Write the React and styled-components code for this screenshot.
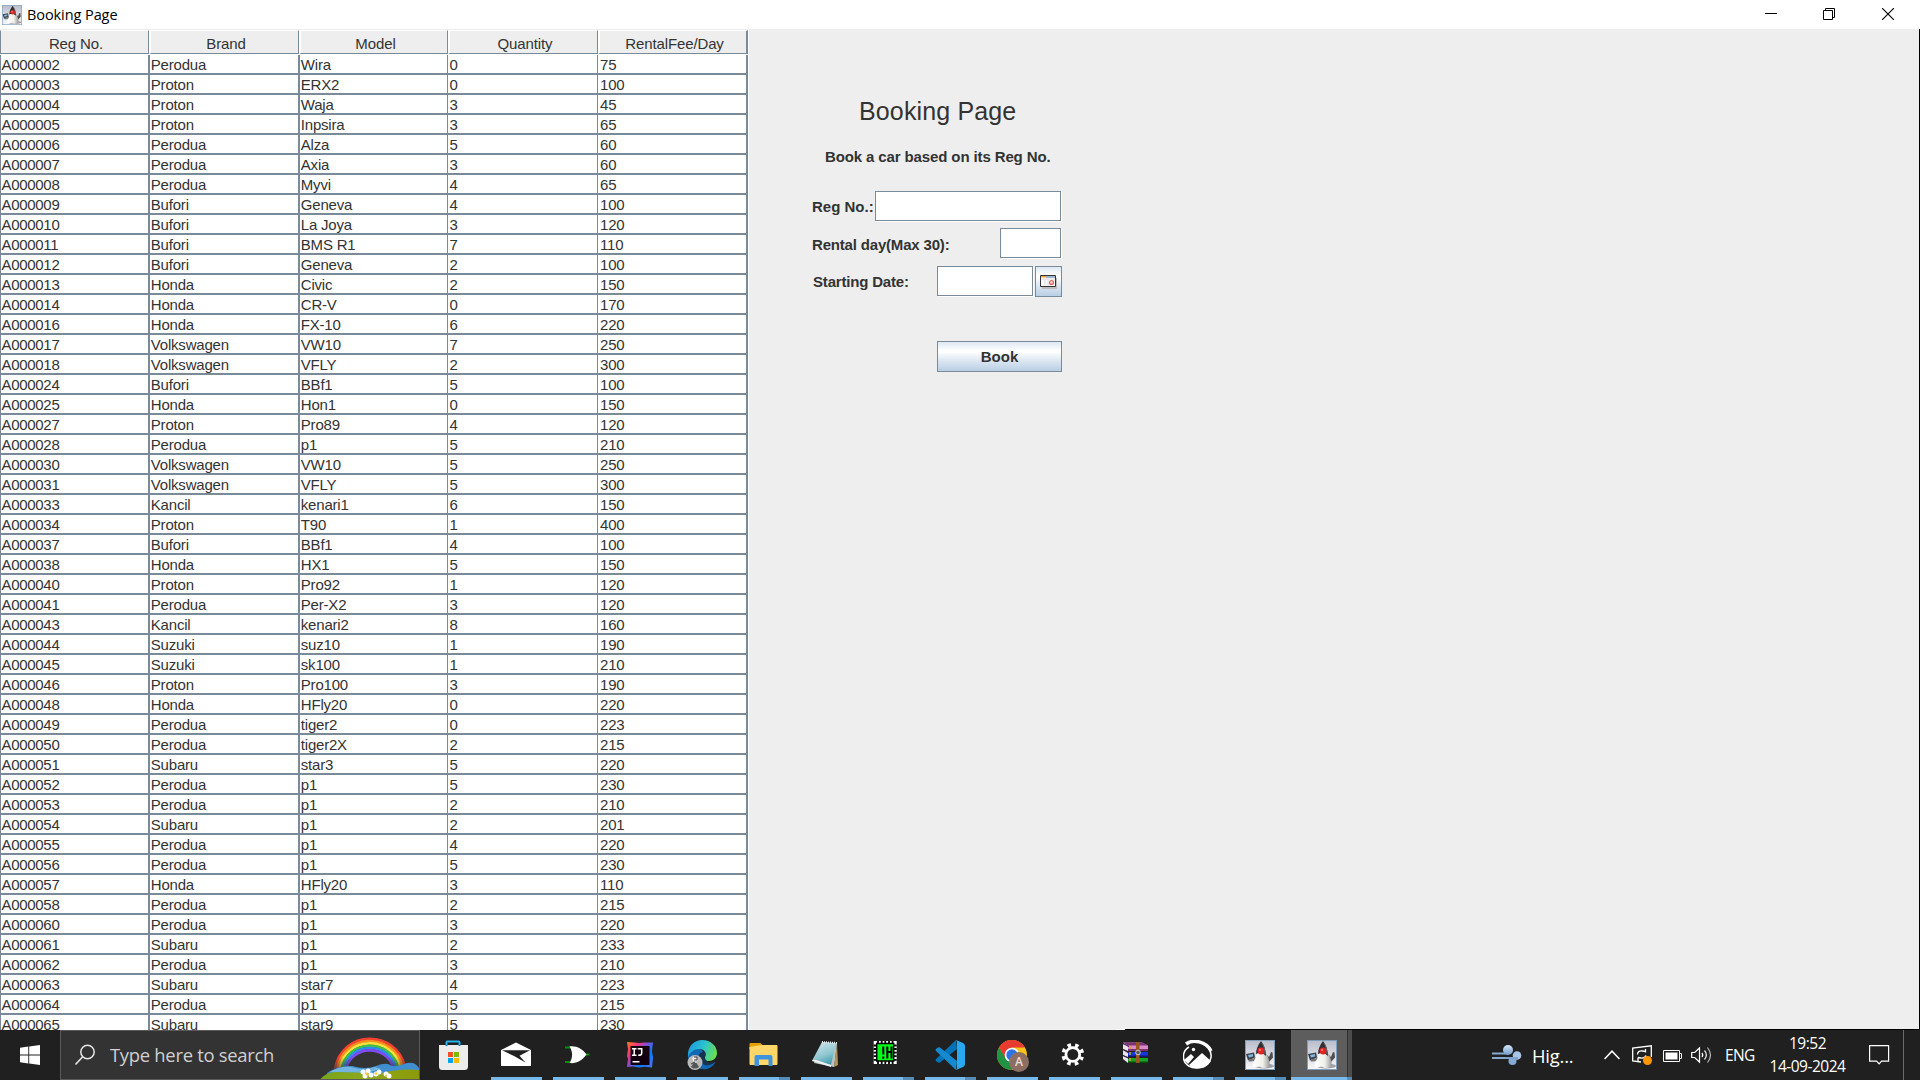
import React from "react";
import styled, { createGlobalStyle, css } from "styled-components";

const GlobalStyle = createGlobalStyle`
  * { box-sizing: border-box; }
  html, body { margin: 0; padding: 0; overflow: hidden; background: #eee; }
`;

const SWING = `"Liberation Sans", Arial, sans-serif`;
const SYSTEM = `"Open Sans", "Noto Sans", sans-serif`;
const STEEL = "#7a8a99";

const Screen = styled.div`
  width: 1920px;
  height: 1080px;
  display: flex;
  flex-direction: column;
  overflow: hidden;
  background: #eee;
`;

/* ---------- title bar ---------- */
const TitleBar = styled.header`
  height: 29px;
  flex: none;
  display: flex;
  align-items: center;
  padding-left: 2px;
  padding-right: 3px;
  background: #fff;
`;
const TitleText = styled.span`
  flex: 1;
  margin-left: 5px;
  font: 14.5px/20px ${SYSTEM};
  letter-spacing: -0.08px;
  color: #000;
`;
const WindowButton = styled.div`
  width: 58.5px;
  height: 29px;
  display: flex;
  align-items: center;
  justify-content: center;
  padding-bottom: 1px;
  svg { display: block; }
`;

/* ---------- window body ---------- */
const Body = styled.main`
  height: 1001px;
  flex: none;
  display: flex;
  overflow: hidden;
  border-right: 1px solid #000;
`;
const Table = styled.section`
  width: 748px;
  flex: none;
  overflow: hidden;
  background: #fff;
  font: 15px/18px ${SWING};
  color: #333;
`;
const COLUMNS = "150px 150px 148px 150px 150px";
const HeadRow = styled.div`
  display: grid;
  grid-template-columns: 149px 150px 149px 150px 150px;
  height: 26px;
  border-top: 1px solid #eee;
  border-bottom: 1px solid #fff;
`;
const HeadCell = styled.div`
  height: 24px;
  background: #eee;
  border-style: solid;
  border-width: 1px 1px 1px 2px;
  border-color: #fff ${STEEL} ${STEEL} #fff;
  padding-left: 3px;
  text-align: center;
  line-height: 25px;
  letter-spacing: -0.12px;
  ${(p) => p.$first && css`border-left-color: ${STEEL}; border-left-width: 1px;`}
  ${(p) => p.$last && css`border-right-width: 2px;`}
`;
const Row = styled.div`
  display: grid;
  grid-template-columns: ${COLUMNS};
  height: 20px;
  border-bottom: 2px solid ${STEEL};
`;
const Cell = styled.div`
  height: 18px;
  padding-left: ${(p) => p.$pad}px;
  border-right: ${(p) => p.$rule}px solid ${STEEL};
  border-left: ${(p) => (p.$first ? 1 : 0)}px solid ${STEEL};
  letter-spacing: ${(p) => (p.$first ? -0.3 : -0.2)}px;
  line-height: 19px;
  white-space: nowrap;
`;

/* ---------- booking form ---------- */
const FormPane = styled.section`
  flex: 1;
  border-left: 1px solid #fff;
  padding: 66px 0 0 63px;
  font: bold 15px/18px ${SWING};
  color: #333;
`;
const Form = styled.div`
  width: 250px;
  display: flex;
  flex-direction: column;
`;
const Heading = styled.h1`
  margin: 0;
  font: 25px/32px ${SWING};
  padding-left: 47px;
  letter-spacing: 0.14px;
  white-space: nowrap;
`;
const Hint = styled.p`
  margin: 21px 0 0;
  padding-left: 13px;
  letter-spacing: -0.12px;
  white-space: nowrap;
`;
const Field = styled.div`
  display: flex;
  justify-content: space-between;
  align-items: flex-start;
  height: 31px;
  margin-top: ${(p) => p.$gap}px;
`;
const Label = styled.label`
  padding-top: ${(p) => p.$drop}px;
  padding-left: ${(p) => p.$indent || 0}px;
  letter-spacing: ${(p) => p.$track || 0}px;
  white-space: nowrap;
`;
const Input = styled.div`
  width: ${(p) => p.$w}px;
  height: 30px;
  background: #fff;
  border: 1px solid ${STEEL};
  box-shadow: 1px 1px 0 #fff;
  margin-right: 1px;
`;
const Group = styled.div`
  display: flex;
  gap: 1px;
`;
const metal = css`
  border: 1px solid ${STEEL};
  background: linear-gradient(#dde8f3 0%, #fff 30%, #fff 34%, #dfe8f2 62%, #b8cfe5 100%);
`;
const DateButton = styled.div`
  ${metal}
  width: 27px;
  height: 31px;
  display: flex;
  padding: 8px 0 0 4px;
`;
const BookButton = styled.div`
  ${metal}
  width: 125px;
  height: 31px;
  margin: 44px 0 0 125px;
  text-align: center;
  line-height: 29px;
`;

/* ---------- taskbar ---------- */
const TaskTop = styled.div`
  height: 1px;
  margin: -1px 0 0 1116px;
  border-left: 9px solid #fff;
  background: #000;
  flex: none;
`;
const Taskbar = styled.footer`
  height: 50px;
  flex: none;
  display: flex;
  background: #202020;
  color: #fff;
  font-family: ${SYSTEM};
`;
const Start = styled.div`
  width: 60px;
  padding: 15px 0 0 20px;
`;
const Search = styled.div`
  width: 360px;
  height: 50px;
  display: flex;
  background: #333;
  border: 1px solid #5a5a5a;
  padding-left: 13px;
  overflow: hidden;
`;
const SearchText = styled.span`
  width: 209px;
  margin-left: 14px;
  font-size: 18.4px;
  line-height: 48px;
  letter-spacing: -0.27px;
  color: #d0d0d0;
  white-space: nowrap;
  flex: none;
`;
const Apps = styled.div`
  display: flex;
  margin-left: 3px;
`;
const AppButton = styled.div`
  width: ${(p) => (p.$active ? 61 : 62)}px;
  height: 50px;
  padding: 0 ${(p) => (p.$active ? 0 : 5.5)}px;
  display: flex;
  flex-direction: column;
  align-items: center;
  background: ${(p) => (p.$active ? "linear-gradient(90deg,#5d5d5d 56px,#303030 56px,#303030 57px,#4c4c4c 57px)" : "none")};
  svg { display: block; margin: 10px 0 7px; flex: none; }
`;
const Running = styled.div`
  width: 100%;
  height: 3px;
  background: ${(p) => (p.$stack ? `linear-gradient(90deg,#76b9ed calc(100% - ${p.$stack}px),#568cb5 calc(100% - ${p.$stack}px))` : "#76b9ed")};
`;
const Tray = styled.div`
  flex: 1;
  display: flex;
  align-items: flex-start;
  padding-left: ${(p) => p.$lead}px;
  font-size: 15.5px;
  svg { display: block; flex: none; }
`;
const Slot = styled.div`
  width: ${(p) => p.$w}px;
  flex: none;
  padding-top: ${(p) => p.$top}px;
  padding-left: ${(p) => p.$left || 0}px;
`;
const Weather = styled(Slot)`
  font-size: 18.4px;
  line-height: 25px;
  letter-spacing: -0.2px;
`;
const Lang = styled(Slot)`
  line-height: 22px;
  letter-spacing: -0.6px;
`;
const Clock = styled(Slot)`
  line-height: 23px;
  text-align: center;
  letter-spacing: -0.5px;
`;
const ShowDesktop = styled.div`
  height: 50px;
  border-left: 1px solid #6a6a6a;
`;

/* ---------- icons ---------- */
const Duke = ({ size }) => (
  <svg width={size} height={size} viewBox="0 0 30 30">
    <defs>
      <linearGradient id="dk" x1="0" y1="0" x2="0" y2="1">
        <stop offset="0" stopColor="#b9bdca" />
        <stop offset="1" stopColor="#f8f8fb" />
      </linearGradient>
      <linearGradient id="db" x1="0" y1="0" x2="1" y2="0">
        <stop offset="0" stopColor="#fff" />
        <stop offset="0.6" stopColor="#f0f0ea" />
        <stop offset="1" stopColor="#999" />
      </linearGradient>
    </defs>
    <rect x=".5" y=".5" width="29" height="29" fill="url(#dk)" stroke="#7f9db9" />
    <ellipse cx="19" cy="26" rx="10" ry="2.500" fill="#9fa0a8" />
    <path d="M1 14l8-1.500 1 5-7 3z" fill="#3c4148" />
    <path d="M3 15l5-1v2.500l-4 1z" fill="#82b7e4" />
    <path d="M4 20c3 1 5 0 8-2" stroke="#777" strokeWidth="2.500" fill="none" />
    <path d="M21 14l3 3 2-5 1.500.500.500 5-4 4.500-4-2z" fill="#4d4d50" />
    <path d="M12 13c-1 6-4.500 9-4.500 13 2 3 6 0 8 1 3 2 6 1 9-1 1-5-2-10-4-14z" fill="url(#db)" />
    <path d="M16 1c-3 4-5 8-5 13 4-2 7-1 10 2 0-6-2-11-5-15z" fill="#303032" />
    <path d="M17 3c2 3 3 7 3 11" stroke="#666" fill="none" />
    <circle cx="16" cy="11" r="3.400" fill="#e02424" />
    <circle cx="15" cy="10" r="1.200" fill="#f87060" />
  </svg>
);
const Store = () => (
  <svg width="30" height="30" viewBox="1 0 30 30">
    <path d="M8.500 6V2.500a1 1 0 0 1 1-1h11a1 1 0 0 1 1 1V6" fill="none" stroke="#27b2ee" strokeWidth="2" />
    <path d="M1 5h29v21.500a3.500 3.500 0 0 1-3.500 3.500h-22A3.500 3.500 0 0 1 1 26.500z" fill="#ececec" />
    <path d="M8.500 6V5M21.500 6V5" stroke="#0f78c4" strokeWidth="2" />
    <path fill="#f25022" d="M10 12h5v5h-5z" />
    <path fill="#7fba00" d="M16 12h5v5h-5z" />
    <path fill="#00a4ef" d="M10 18h5v5h-5z" />
    <path fill="#ffb900" d="M16 18h5v5h-5z" />
  </svg>
);
const Mail = () => (
  <svg width="30" height="30" viewBox="0 0 30 30">
    <path fill="#fff" d="M15 2.500L30 10v16H0V10z" />
    <path fill="#202020" d="M1 10.300h28l-10.500 5.500 6 6.700L13 16z" />
  </svg>
);
const Gate = () => (
  <svg width="30" height="30" viewBox="0 0 30 30">
    <path d="M2 7.500h5M2 22h5M22 14.500h4.500" stroke="#0a8a12" strokeWidth="2" />
    <path fill="#fff" d="M6.500 6.500c7-1 13 2.500 17 8-4 5.500-10 9.500-17 8.500 3.500-5.500 3.500-11 0-16.500z" />
  </svg>
);
const Idea = () => (
  <svg width="30" height="30" viewBox="0 0 30 30">
    <defs>
      <linearGradient id="ij" x1="0" y1="0" x2="1" y2=".8">
        <stop offset="0" stopColor="#fc801d" />
        <stop offset=".3" stopColor="#f0337f" />
        <stop offset=".52" stopColor="#7b53d8" />
        <stop offset=".75" stopColor="#087cfa" />
        <stop offset="1" stopColor="#3f74f6" />
      </linearGradient>
    </defs>
    <path fill="url(#ij)" d="M2 2l8 .5L14 3l5-.5 9 0-1 9 1 6-1 10-7-.8-6 .8-6-1-6 .5 1-8L2 16l1-7z" />
    <path fill="#12000f" d="M5.500 6h19v19h-19z" />
    <path d="M7 8.700h4.500M7 15.300h4.500M9.200 8.700v6.600M12.700 8.700h4v4.500q0 2.100-3.500 2.100M7.500 21.800h7" stroke="#fff" strokeWidth="1.500" fill="none" />
  </svg>
);
const Edge = () => (
  <svg width="30" height="30" viewBox="0 0 30 30">
    <defs>
      <linearGradient id="eg" x1="0" y1=".3" x2="1" y2=".6">
        <stop offset="0" stopColor="#1c9ae0" />
        <stop offset=".5" stopColor="#2cc3cf" />
        <stop offset="1" stopColor="#6be04b" />
      </linearGradient>
    </defs>
    <path fill="#1267b5" d="M1 14C6 6 15 8 16 12c-3 2-4 8 2 11 4 1.500 8 0 10.500-1C25 29 17 31 11 28 4 25 0 20 1 14z" />
    <path fill="url(#eg)" d="M1 13C2 5 8 0 15 0c9 0 15 6 15 13 0 5-4 8-8 8-4 0-5-2-4-4 2-3 0-8-6-8-5 0-9 3-11 8z" />
    <path fill="#17324e" d="M13 13c-2 4-1 10 5 12 4 1 8-1 10-3-4 2-9 0-10-4-1-2 1-3 0-6z" />
    <circle cx="8" cy="22.500" r="7.500" fill="#b8b9b8" />
    <circle cx="8" cy="19" r="2.600" fill="#ececec" />
    <path d="M4 27l2.500-4h3l2.500 4q-4 3-8 0" fill="#555" />
    <path d="M7 17h3v3H7M4 24l4-2" stroke="#3b3b3b" fill="none" />
  </svg>
);
const Explorer = () => (
  <svg width="30" height="30" viewBox="0 0 30 30">
    <path fill="#e2a100" d="M.5 4q0-1 1-1h10l2 2v4H.5z" />
    <path fill="#ffd667" d="M.5 7l12-2h15q1 0 1 1v18q0 1-1 1h-26q-1 0-1-1z" />
    <path fill="#3d93dd" d="M5.500 26V17q0-2 2-2h14q2 0 2 2v9h-4v-6.500h-9.500V26z" />
  </svg>
);
const Notepad = () => (
  <svg width="30" height="30" viewBox="0 0 30 30">
    <defs>
      <linearGradient id="np" x1=".2" y1="0" x2=".6" y2="1">
        <stop offset="0" stopColor="#cfe5e7" />
        <stop offset=".6" stopColor="#8dc6d0" />
        <stop offset="1" stopColor="#409eaf" />
      </linearGradient>
    </defs>
    <path fill="#b69459" d="M26 4l1 21-4 2z" />
    <path fill="#bcc2c1" d="M11 3l15 1-3 23-20-4z" />
    <path fill="url(#np)" d="M11 2l14 1-5 22-18-6z" />
    <path fill="#eef2f2" d="M2 19l18 6v2L1 21z" />
    <path d="M11 2l15 1" stroke="#eee" strokeWidth="2" strokeDasharray="1 1" />
  </svg>
);
const Chip = () => (
  <svg width="30" height="30" viewBox="0 0 30 30">
    <path fill="#fff" d="M.7 1h23v23H.7z" />
    <path d="M5 1v23M8.700 1v23M12.300 1v23M16 1v23M19.600 1v23M.7 5.500h23M.7 9h23M.7 12.600h23M.7 16.200h23M.7 19.800h23" stroke="#000" strokeWidth="1.800" />
    <path fill="#00ff18" stroke="#000" strokeWidth="1.500" d="M3.700 3.500h17v17.500h-17z" />
    <path d="M10.300 6.500v8M10.300 16.500v2.200M14.300 6.500v12M18.500 6.500v12M14.300 12h4" stroke="#000" strokeWidth="2" />
  </svg>
);
const Code = () => (
  <svg width="30" height="30" viewBox="0 0 30 30">
    <path fill="#0072b8" d="M21 0L1 19q-1 1 0 2l2 1.500q1 .5 2 0L22 9z" />
    <path fill="#168ad0" d="M21 30L1 11q-1-1 0-2l2-1.500q1-.5 2 0L22 21z" />
    <path fill="#29a8f1" d="M21 0l7 3q2 1 2 3v18q0 2-2 3l-7 3q1-1 1-3V3q0-2-1-3z" />
  </svg>
);
const Letter = styled.span`
  width: 20px;
  height: 20px;
  position: absolute;
  left: 12px;
  top: 12px;
  border-radius: 50%;
  background: #8d6e63;
  color: #e9dedb;
  font: 600 12px/20px ${SYSTEM};
  text-align: center;
`;
const BadgeBox = styled.div`
  position: relative;
  width: 30px;
  height: 30px;
  margin: 10px 0 7px;
  flex: none;
  && svg { margin: 0; }
`;
const Chrome = () => (
  <BadgeBox>
    <svg width="30" height="30" viewBox="0 0 30 30">
      <circle cx="15" cy="15" r="15" fill="#f9c21b" />
      <path fill="#e63b2e" d="M2 7.500A15 15 0 0 1 28 7.500H15L8.500 19z" />
      <path fill="#229342" d="M2 7.500A15 15 0 0 0 15 30l6.500-11H9z" />
      <circle cx="15" cy="15" r="7.300" fill="#fff" />
      <circle cx="15" cy="15" r="5.700" fill="#2a73e8" />
    </svg>
    <Letter>A</Letter>
  </BadgeBox>
);
const Gear = () => (
  <svg width="30" height="30" viewBox="1.200 0 30 30">
    <circle cx="15" cy="14.500" r="9.300" fill="none" stroke="#fff" strokeWidth="4.200" strokeDasharray="3.500 3.804" strokeDashoffset="1.750" transform="rotate(22.500 15 14.500)" />
    <circle cx="15" cy="14.500" r="6.900" fill="none" stroke="#fff" strokeWidth="2.800" />
  </svg>
);
const Rar = () => (
  <svg width="30" height="30" viewBox="0 0 30 30">
    <path fill="#d98acb" d="M2 2.500h19l6 3v5H7z" />
    <path fill="#7d3374" d="M2 2.500h19l6 3H7zM7 9h20v2H7z" />
    <path fill="#1636e0" d="M7 12h20v5H7z" />
    <path fill="#0a1a72" d="M7 15.500h20v1.500H7z" />
    <path fill="#18a321" d="M7 18h20v5H7z" />
    <path fill="#0a4c10" d="M7 21.500h20v1.500H7z" />
    <path fill="#e8e4ee" d="M2 4l5 3v4L2 9zM2 10l5 3v4l-5-2zM2 16l5 2v5l-5-4z" />
    <path d="M2 3.500l6 3M2 9.500l6 3M2 15.500l6 3" stroke="#3d244b" />
    <path d="M9 6v16" stroke="#d4a928" strokeWidth="1.500" strokeDasharray="3 3" />
    <path fill="#9a561f" d="M15 2h3.500v21H15z" />
    <circle cx="17" cy="12.500" r="2.300" fill="#555" stroke="#ccc" />
  </svg>
);
const Photo = () => (
  <svg width="30" height="30" viewBox="0 0 30 30">
    <path d="M3 4C10-1 23 1 28 11" stroke="#fff" strokeWidth="3.500" fill="none" />
    <path d="M25 7c6 8 3 17-6 20-10 3-19-2-18.500-11C.6 12 2.500 9 6 7" stroke="#fff" strokeWidth="1.500" fill="none" />
    <path fill="#fff" d="M1 20l7-6 3 3-6 7zM6 25l13-12 9 8c-5 9-15 9-22 4z" />
    <circle cx="10.500" cy="9.500" r="1.700" fill="#fff" />
  </svg>
);

const APPS = [
  [Store, 0], [Mail, 1], [Gate, 1], [Idea, 1], [Edge, 1], [Explorer, 2], [Notepad, 1], [Chip, 2],
  [Code, 2], [Chrome, 1], [Gear, 1], [Rar, 1], [Photo, 2], [Duke, 2], [Duke, 3],
];
const STACK = [0, 0, 11, 5];

const Rainbow = () => (
  <svg width="100" height="50" viewBox="0 0 100 50" style={{ flex: "none" }}>
    <defs>
      <linearGradient id="fade" x1="0" y1="8" x2="0" y2="38" gradientUnits="userSpaceOnUse">
        <stop offset=".6" stopColor="#fff" />
        <stop offset="1" stopColor="#fff" stopOpacity=".35" />
      </linearGradient>
      <mask id="m"><rect width="100" height="50" fill="url(#fade)" /></mask>
      <linearGradient id="grass" x1="0" y1="0" x2="1" y2="0">
        <stop offset="0" stopColor="#79a51c" />
        <stop offset=".5" stopColor="#8fa81a" />
        <stop offset="1" stopColor="#8c9a08" />
      </linearGradient>
    </defs>
    <g fill="none" strokeWidth="2.600" mask="url(#m)">
      {["#f4412f", "#fb8c1e", "#fbe13a", "#3fc04a", "#2f8df2", "#7f4af0"].map((c, i) => (
        <path key={c} stroke={c} d={`M${16 + i * 2.2} 38C${23 + i * 2} ${-2 + i * 3.1} ${77 - i * 2} ${-2 + i * 3.1} ${86 - i * 2.4} 36`} />
      ))}
    </g>
    <path fill="#3f8fd0" d="M8 42q12-8 25-7 14 4 24 0t14-1 14-1 15 4v13H8z" />
    <path fill="#72b4e0" d="M10 41q12-6 22-5 12 4 24 0l6 2-15 4z" />
    <path fill="url(#grass)" d="M0 50q5-8 16-9 20 0 42 2 22-6 42-4v11z" />
    <g fill="#fff">
      {[[44, 41], [49, 40], [52, 44], [46, 45], [57, 43], [60, 41], [67, 43], [70, 45]].map(([x, y]) => (
        <circle key={x} cx={x} cy={y} r="2.500" />
      ))}
    </g>
    <g fill="#f7c531">
      <circle cx="48" cy="43" r="1.400" /><circle cx="57" cy="42.500" r="1.200" /><circle cx="67" cy="44.500" r="1" />
    </g>
  </svg>
);

const ROWS = `A000002,Perodua,Wira,0,75
A000003,Proton,ERX2,0,100
A000004,Proton,Waja,3,45
A000005,Proton,Inpsira,3,65
A000006,Perodua,Alza,5,60
A000007,Perodua,Axia,3,60
A000008,Perodua,Myvi,4,65
A000009,Bufori,Geneva,4,100
A000010,Bufori,La Joya,3,120
A000011,Bufori,BMS R1,7,110
A000012,Bufori,Geneva,2,100
A000013,Honda,Civic,2,150
A000014,Honda,CR-V,0,170
A000016,Honda,FX-10,6,220
A000017,Volkswagen,VW10,7,250
A000018,Volkswagen,VFLY,2,300
A000024,Bufori,BBf1,5,100
A000025,Honda,Hon1,0,150
A000027,Proton,Pro89,4,120
A000028,Perodua,p1,5,210
A000030,Volkswagen,VW10,5,250
A000031,Volkswagen,VFLY,5,300
A000033,Kancil,kenari1,6,150
A000034,Proton,T90,1,400
A000037,Bufori,BBf1,4,100
A000038,Honda,HX1,5,150
A000040,Proton,Pro92,1,120
A000041,Perodua,Per-X2,3,120
A000043,Kancil,kenari2,8,160
A000044,Suzuki,suz10,1,190
A000045,Suzuki,sk100,1,210
A000046,Proton,Pro100,3,190
A000048,Honda,HFly20,0,220
A000049,Perodua,tiger2,0,223
A000050,Perodua,tiger2X,2,215
A000051,Subaru,star3,5,220
A000052,Perodua,p1,5,230
A000053,Perodua,p1,2,210
A000054,Subaru,p1,2,201
A000055,Perodua,p1,4,220
A000056,Perodua,p1,5,230
A000057,Honda,HFly20,3,110
A000058,Perodua,p1,2,215
A000060,Perodua,p1,3,220
A000061,Subaru,p1,2,233
A000062,Perodua,p1,3,210
A000063,Subaru,star7,4,223
A000064,Perodua,p1,5,215
A000065,Subaru,star9,5,230`.split("\n").map((r) => r.split(","));

const HEADERS = ["Reg No.", "Brand", "Model", "Quantity", "RentalFee/Day"];
const RULES = [2, 2, 1, 1, 2];
const PADS = [0.5, 0.8, 0.8, 1.6, 2];

export default function App() {
  return (
    <Screen>
      <GlobalStyle />
      <TitleBar>
        <Duke size={20} />
        <TitleText>Booking Page</TitleText>
        <WindowButton>
          <svg width="12" height="12"><path d="M0 5.500h12" stroke="#000" /></svg>
        </WindowButton>
        <WindowButton>
          <svg width="12" height="12"><path d="M.5 2.500h9v9h-9zM2.500 2.500v-2h9v9h-2" stroke="#000" fill="none" /></svg>
        </WindowButton>
        <WindowButton>
          <svg width="12" height="12"><path d="M0 0l12 12M12 0L0 12" stroke="#000" strokeWidth="1.100" /></svg>
        </WindowButton>
      </TitleBar>

      <Body>
        <Table>
          <HeadRow>
            {HEADERS.map((h, i) => (
              <HeadCell key={h} $first={i === 0} $last={i === 4}>{h}</HeadCell>
            ))}
          </HeadRow>
          {ROWS.map((r) => (
            <Row key={r[0]}>
              {r.map((v, i) => (
                <Cell key={i} $first={i === 0} $rule={RULES[i]} $pad={PADS[i]}>{v}</Cell>
              ))}
            </Row>
          ))}
        </Table>
        <FormPane>
          <Form>
            <Heading>Booking Page</Heading>
            <Hint>Book a car based on its Reg No.</Hint>
            <Field $gap={25}>
              <Label $drop={7}>Reg No.:</Label>
              <Input $w={186} />
            </Field>
            <Field $gap={6}>
              <Label $drop={8} $track={-0.18}>Rental day(Max 30):</Label>
              <Input $w={61} />
            </Field>
            <Field $gap={7}>
              <Label $drop={7} $indent={1} $track={-0.18}>Starting Date:</Label>
              <Group>
                <Input $w={96} />
                <DateButton>
                  <svg width="17" height="14">
                    <path fill="#bdbdbd" d="M2 3h15v11H2z" />
                    <path fill="#fff" stroke="#333" d="M.5.500h15v11H.5z" />
                    <path fill="#f5a623" d="M1 1h5v1.500H1z" />
                    <path fill="#9fb6cf" d="M6 1h9v2H6z" />
                    <path d="M5 4v7M8 4v7M1 4h14" stroke="#d8d8d8" />
                    <circle cx="11.500" cy="7.500" r="2" fill="#f7cfcf" stroke="#e86060" strokeWidth="1.200" />
                  </svg>
                </DateButton>
              </Group>
            </Field>
            <BookButton>Book</BookButton>
          </Form>
        </FormPane>
      </Body>
      <TaskTop />

      <Taskbar>
        <Start>
          <svg width="20" height="20" viewBox="0 0 20 20" style={{ display: "block" }}>
            <path fill="#fff" d="M0 2.800l8.300-1.200v8H0zM9.200 1.500L20 0v9.600H9.200zM0 10.500h8.300v8L0 17.300zM9.200 10.500H20V20L9.200 18.600z" />
          </svg>
        </Start>
        <Search>
          <svg width="22" height="22" viewBox="0 0 22 22" style={{ marginTop: 13, flex: "none" }}>
            <circle cx="13.500" cy="8" r="6.700" fill="none" stroke="#e6e6e6" strokeWidth="1.500" />
            <path d="M8.700 12.800L1.500 20.500" stroke="#e6e6e6" strokeWidth="1.600" />
          </svg>
          <SearchText>Type here to search</SearchText>
          <Rainbow />
        </Search>
        <Apps>
          {APPS.map(([Icon, state], i) => (
            <AppButton key={i} $active={state === 3}>
              <Icon size={30} />
              {state > 0 && <Running $stack={STACK[state]} />}
            </AppButton>
          ))}
        </Apps>
        <Tray $lead={140}>
          <Slot $w={40} $top={14}>
            <svg width="30" height="22" viewBox="0 0 30 22">
              <defs>
                <linearGradient id="wd" x1="0" y1="0" x2="0" y2="1">
                  <stop offset="0" stopColor="#d7e6fa" />
                  <stop offset="1" stopColor="#6f9ccb" />
                </linearGradient>
              </defs>
              <path d="M0 9.500h17M0 14h20" stroke="#86a9d0" strokeWidth="2.200" />
              <circle cx="16" cy="6" r="5" fill="url(#wd)" />
              <circle cx="25" cy="11.500" r="4.300" fill="#a8c5e8" />
              <circle cx="20.500" cy="17" r="4" fill="#86aad4" />
              <path d="M13 13h13v2H13z" fill="#7ea3cc" />
            </svg>
          </Slot>
          <Weather $w={72} $top={13}>Hig...</Weather>
          <Slot $w={28} $top={20}>
            <svg width="16" height="10"><path d="M.5 9L8 1.200 15.500 9" stroke="#fff" strokeWidth="1.500" fill="none" /></svg>
          </Slot>
          <Slot $w={31} $top={15}>
            <svg width="22" height="20">
              <path d="M9 17L.7 16V3L19.300.800V12" stroke="#fff" strokeWidth="1.300" fill="none" />
              <path d="M5.500 9.500q0-4 5-3.500l3 .5M13.500 4v3.500M14 10.500q-1 3-5 2.500l-3-.5M6 16v-3.500" stroke="#fff" strokeWidth="1.300" fill="none" />
              <circle cx="15.500" cy="15.500" r="4.500" fill="#ff9800" />
            </svg>
          </Slot>
          <Slot $w={28} $top={20}>
            <svg width="20" height="12">
              <path d="M.5.500h16v11H.5zM17 3.500h1.500v5H17" stroke="#fff" fill="none" />
              <path fill="#fff" d="M2.500 2.500h12v7h-12z" />
            </svg>
          </Slot>
          <Slot $w={34} $top={16}>
            <svg width="22" height="18">
              <path d="M.7 6.500h3L8.500 2v14L3.700 11.500h-3z" stroke="#fff" strokeWidth="1.200" fill="none" />
              <path d="M11 7q1.500 2 0 4" stroke="#fff" strokeWidth="1.300" fill="none" />
              <path d="M13.500 4.500q3.800 4.500 0 9" stroke="#ddd" strokeWidth="1.300" fill="none" />
              <path d="M16.500 1.500q6 7.500 0 15" stroke="#bbb" strokeWidth="1.200" fill="none" />
            </svg>
          </Slot>
          <Lang $w={32} $top={14}>ENG</Lang>
          <Clock $w={101} $top={2}>
            <div>19:52</div>
            <div>14-09-2024</div>
          </Clock>
          <Slot $w={45} $top={15} $left={10.5}>
            <svg width="21" height="21">
              <path d="M.6.600h19v15.500h-7l-2.500 2.700-2.500-2.700h-7z" stroke="#fff" strokeWidth="1.200" fill="none" />
            </svg>
          </Slot>
          <ShowDesktop />
        </Tray>
      </Taskbar>
    </Screen>
  );
}
